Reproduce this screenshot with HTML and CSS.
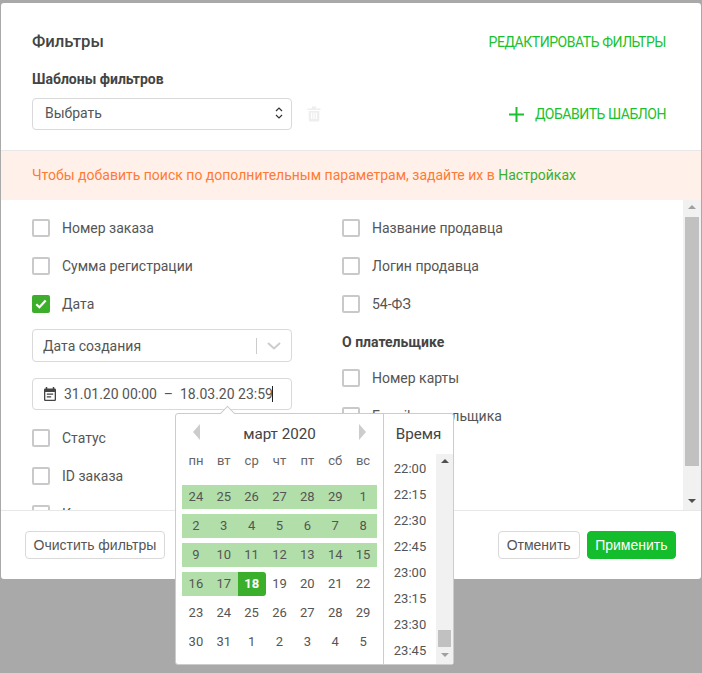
FILE: index.html
```html
<!DOCTYPE html>
<html lang="ru">
<head>
<meta charset="utf-8">
<title>Фильтры</title>
<link rel="stylesheet" href="styles.css">
</head>
<body>
<div class="modal">
  <header class="head">
    <div class="title-row">
      <h1 class="title">Фильтры</h1>
      <a class="link">РЕДАКТИРОВАТЬ ФИЛЬТРЫ</a>
    </div>
    <div class="sub-label">Шаблоны фильтров</div>
    <div class="template-row">
      <div class="field template-select">
        <span>Выбрать</span>
        <svg class="spinner" width="10" height="14" viewBox="0 0 10 14"><path d="M2 5l3-3 3 3M2 9l3 3 3-3" fill="none" stroke="#333" stroke-width="1.2"/></svg>
      </div>
      <svg class="trash" width="14" height="16" viewBox="0 0 14 16"><path d="M0.5 2.5h13v1.6h-13zM5 0.5h4v2H5zM1.7 5h10.6v9.2a1.4 1.4 0 0 1-1.4 1.4H3.100a1.4 1.4 0 0 1-1.400-1.400zM4 6.500v6.500h1.300V6.500zM6.350 6.500v6.500h1.300V6.500zM8.700 6.500v6.500H10V6.500z" fill="#eeeeee" fill-rule="evenodd"/></svg>
      <a class="link add-link">
        <svg width="15" height="15" viewBox="0 0 15 15"><path d="M7.500 0v15M0 7.500h15" stroke="#1bc12e" stroke-width="2"/></svg>
        <span>ДОБАВИТЬ ШАБЛОН</span>
      </a>
    </div>
  </header>
  <div class="notice">Чтобы добавить поиск по дополнительным параметрам, задайте их в <a class="notice-link">Настройках</a></div>
  <div class="scroll">
    <div class="columns">
      <div class="col col-left">
        <label class="row"><span class="box"></span>Номер заказа</label>
        <label class="row"><span class="box"></span>Сумма регистрации</label>
        <label class="row"><span class="box checked"><svg width="12" height="10" viewBox="0 0 12 10"><path d="M1.300 5.200l3.100 3 6.300-6.800" fill="none" stroke="#fff" stroke-width="2.200"/></svg></span>Дата</label>
        <div class="field date-type">
          <span>Дата создания</span>
          <span class="date-type-end">
            <i class="divider"></i>
            <svg width="14" height="8" viewBox="0 0 14 8"><path d="M1 1l6 5.500L13 1" fill="none" stroke="#ccc" stroke-width="2"/></svg>
          </span>
        </div>
        <div class="field date-range">
          <svg width="12" height="14" viewBox="0 0 12 14"><path d="M2.500 0v2M9.500 0v2" stroke="#444" stroke-width="1.500"/><path fill="#444" fill-rule="evenodd" d="M1.300 1.500h9.400A1.300 1.300 0 0 1 12 2.800v9.900a1.300 1.300 0 0 1-1.300 1.300H1.300A1.300 1.300 0 0 1 0 12.700V2.800A1.300 1.300 0 0 1 1.300 1.500zM1.300 5v7.700h9.400V5zM2.800 6.500h6.400v1.200H2.800zM2.800 9.300h4.400v1.200H2.800z"/></svg>
          <span class="range-text">31.01.20 00:00  –  18.03.20 23:59</span><i class="text-caret"></i>
        </div>
        <label class="row row-after"><span class="box"></span>Статус</label>
        <label class="row"><span class="box"></span>ID заказа</label>
        <label class="row"><span class="box"></span>Карта</label>
      </div>
      <div class="col col-right">
        <label class="row"><span class="box"></span>Название продавца</label>
        <label class="row"><span class="box"></span>Логин продавца</label>
        <label class="row"><span class="box"></span>54-ФЗ</label>
        <div class="group-label">О плательщике</div>
        <label class="row"><span class="box"></span>Номер карты</label>
        <label class="row"><span class="box"></span>E-mail плательщика</label>
      </div>
    </div>
    <div class="track main-track">
      <i class="arrow-up"></i>
      <i class="thumb main-thumb"></i>
      <i class="arrow-down"></i>
    </div>
  </div>
  <footer class="foot">
    <button class="btn">Очистить фильтры</button>
    <div class="foot-right">
      <button class="btn btn-cancel">Отменить</button>
      <button class="btn btn-primary">Применить</button>
    </div>
  </footer>

  <div class="picker">
    <i class="picker-caret"></i>
    <div class="calendar">
      <div class="cal-head">
        <i class="nav nav-prev"></i>
        <span class="month">март 2020</span>
        <i class="nav nav-next"></i>
      </div>
      <div class="weekdays"><span>пн</span><span>вт</span><span>ср</span><span>чт</span><span>пт</span><span>сб</span><span>вс</span></div>
      <div class="days">
        <span class="in">24</span><span class="in">25</span><span class="in">26</span><span class="in">27</span><span class="in">28</span><span class="in">29</span><span class="in">1</span>
        <span class="in">2</span><span class="in">3</span><span class="in">4</span><span class="in">5</span><span class="in">6</span><span class="in">7</span><span class="in">8</span>
        <span class="in">9</span><span class="in">10</span><span class="in">11</span><span class="in">12</span><span class="in">13</span><span class="in">14</span><span class="in">15</span>
        <span class="in">16</span><span class="in">17</span><span class="end">18</span><span>19</span><span>20</span><span>21</span><span>22</span>
        <span>23</span><span>24</span><span>25</span><span>26</span><span>27</span><span>28</span><span>29</span>
        <span>30</span><span>31</span><span>1</span><span>2</span><span>3</span><span>4</span><span>5</span>
      </div>
    </div>
    <div class="time">
      <div class="time-head">Время</div>
      <div class="time-body">
        <ul class="times">
          <li>22:00</li><li>22:15</li><li>22:30</li><li>22:45</li><li>23:00</li><li>23:15</li><li>23:30</li><li>23:45</li>
        </ul>
        <div class="track time-track">
          <i class="arrow-up"></i>
          <i class="thumb time-thumb"></i>
          <i class="arrow-down arrow-muted"></i>
        </div>
      </div>
    </div>
  </div>
</div>
</body>
</html>
```

FILE: styles.css
```css
* { box-sizing: border-box; }
html, body { margin: 0; height: 673px; overflow: hidden; }
body {
  background: #a9a9a9;
  padding: 3px 1px 0;
  font-family: Roboto, "Liberation Sans", sans-serif;
  font-size: 14px;
  color: #555;
}
.modal {
  position: relative;
  width: 700px;
  height: 576px;
  background: #fff;
  border-radius: 3px;
  display: flex;
  flex-direction: column;
}
.head { padding: 29px 35px 20px 31px; }
.title-row { display: flex; justify-content: space-between; align-items: center; height: 20px; }
.title { margin: 0; font-size: 16.7px; font-weight: 500; color: #444; line-height: 20px; }
.link { color: #1bc12e; font-size: 14px; letter-spacing: -0.46px; line-height: 20px; }
.sub-label { margin-top: 18px; font-size: 14px; font-weight: 700; color: #444; line-height: 18px; }
.template-row { display: flex; align-items: center; margin-top: 10px; height: 32px; }
.field {
  display: flex;
  align-items: center;
  width: 260px;
  background: #fff;
  border: 1px solid #d9d9d9;
  border-radius: 4px;
}
.template-select { height: 32px; padding: 0 7px 2px 12px; justify-content: space-between; }
.trash { margin-left: 15px; }
.add-link { margin-left: auto; display: flex; align-items: center; gap: 11px; }
.notice {
  height: 50px;
  padding-left: 31px;
  border-top: 1px solid #e8e8e8;
  background: #fff1ea;
  color: #ff7a35;
  line-height: 48px;
}
.notice-link { color: #3dae2b; }
.scroll { flex: none; display: flex; height: 310px; }
.columns { flex: 1; display: flex; padding: 9px 0 0 31px; overflow: hidden; }
.col-left { width: 310px; flex: none; }
.row { display: flex; align-items: center; height: 38px; flex: none; color: #555; }
.box {
  width: 18px;
  height: 18px;
  margin-right: 12px;
  flex: none;
  border: 2px solid #c9c9c9;
  border-radius: 2px;
  background: #fff;
}
.box.checked {
  display: flex;
  align-items: center;
  justify-content: center;
  background: #3dae2b;
  border-color: #3dae2b;
}
.date-type { height: 33px; margin-top: 6px; padding: 0 10px; justify-content: space-between; }
.date-type-end { display: flex; align-items: center; gap: 10px; }
.divider { width: 1px; height: 16px; background: #ccc; }
.date-range { height: 32px; margin-top: 16px; padding-left: 11px; }
.range-text { margin-left: 8px; white-space: pre; color: #555; }
.text-caret { width: 1px; height: 16px; background: #222; margin-left: -1px; }
.row-after { margin-top: 9px; }
.group-label { margin: 10px 0 8px; font-weight: 700; color: #444; line-height: 18px; }
.track {
  position: relative;
  flex: none;
  background: #f1f1f1;
}
.main-track { width: 18px; height: 310px; }
.thumb { position: absolute; display: block; background: #c1c1c1; }
.main-thumb { left: 2px; top: 17px; width: 14px; height: 249px; }
.arrow-up, .arrow-down {
  position: absolute;
  left: 50%;
  margin-left: -4px;
  width: 0;
  height: 0;
  border-left: 4px solid transparent;
  border-right: 4px solid transparent;
}
.arrow-up { top: 5px; border-bottom: 4px solid #a0a0a0; }
.arrow-down { bottom: 7px; border-top: 4px solid #505050; }
.arrow-muted { border-top-color: #a0a0a0; }
.time-track .arrow-up { border-bottom-color: #505050; }
.foot {
  flex: none;
  height: 69px;
  border-top: 1px solid #e8e8e8;
  display: flex;
  justify-content: space-between;
  padding: 20px 25px 0 24px;
}
.foot-right { display: flex; gap: 7px; }
.btn {
  height: 28px;
  padding: 0 7.5px;
  border: 1px solid #d9d9d9;
  border-radius: 4px;
  background: #fff;
  font: 14px "Liberation Sans", Roboto, sans-serif;
  color: #555;
}
.btn-cancel { min-width: 82px; }
.btn-primary { background: #13bd2c; border-color: #13bd2c; color: #fff; }
.picker {
  position: absolute;
  left: 174px;
  top: 410px;
  width: 279px;
  height: 252px;
  display: flex;
  background: #fff;
  border: 1px solid #ccc;
  border-radius: 3px;
}
.picker-caret {
  position: absolute;
  left: 46px;
  top: -6px;
  width: 11px;
  height: 11px;
  background: #fff;
  border-left: 1px solid #ccc;
  border-top: 1px solid #ccc;
  transform: rotate(45deg);
}
.calendar { position: relative; width: 208px; flex: none; padding: 0 6px; border-right: 1px solid #ccc; }
.cal-head { display: flex; align-items: center; justify-content: space-between; height: 40px; padding: 0 11px; }
.month { font-size: 15.2px; color: #444; }
.nav { width: 0; height: 0; border-top: 8px solid transparent; border-bottom: 8px solid transparent; margin-top: -4px; }
.nav-prev { border-right: 7px solid #ccc; }
.nav-next { border-left: 7px solid #ccc; }
.weekdays { display: grid; grid-template-columns: repeat(7, 1fr); height: 14px; line-height: 14px; margin-bottom: 17px; text-align: center; font-size: 13px; color: #666; }
.days { display: grid; grid-template-columns: repeat(7, 1fr); grid-auto-rows: 24px; row-gap: 5px; font-size: 13px; color: #555; text-align: center; line-height: 24px; }
.in { background: #b2dfa9; }
.end { background: #3aaf2b; color: #fff; font-weight: 700; border-radius: 0 3px 3px 0; }
.time { flex: 1; min-width: 0; display: flex; flex-direction: column; }
.time-head { height: 40px; line-height: 40px; text-align: center; font-size: 15.2px; color: #444; }
.time-body { display: flex; height: 210px; overflow: hidden; }
.times { flex: 1; margin: 0; padding: 2px 0 0; list-style: none; text-align: center; font-size: 13px; color: #555; }
.times li { height: 26px; line-height: 26px; }
.time-track { width: 17px; height: 210px; }
.time-thumb { left: 2px; top: 176px; width: 13px; height: 17px; }
```
